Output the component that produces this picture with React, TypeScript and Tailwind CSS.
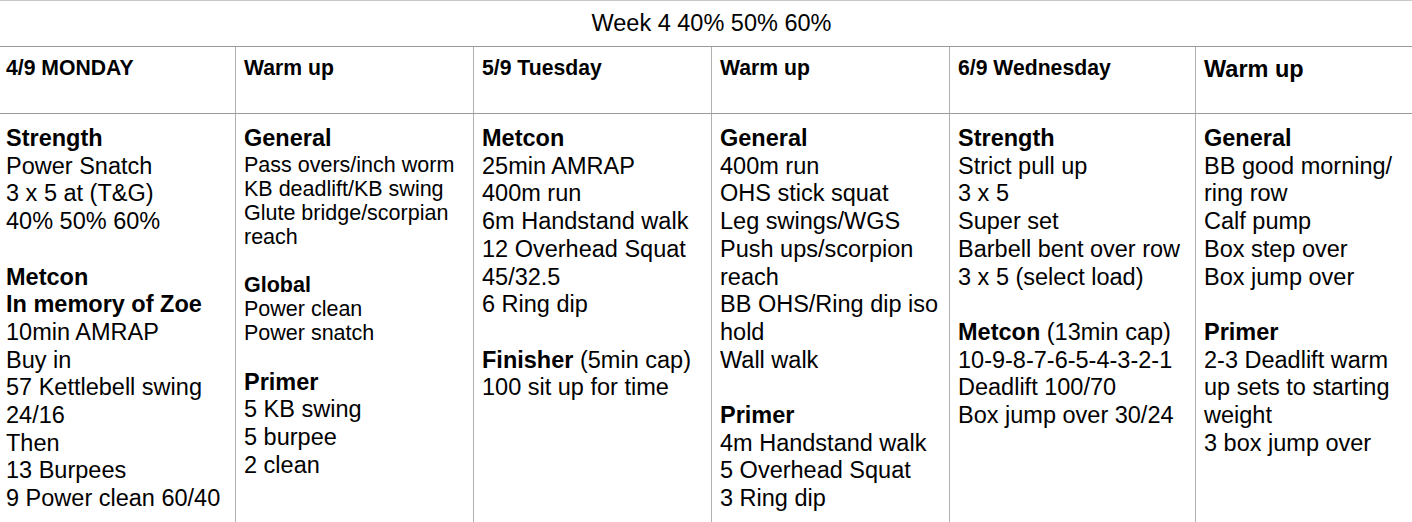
import React from "react";

type L = { t: string; k: "H" | "T" | "h" | "s" | "B" | "b"; extra?: string };

const H = (t: string, extra?: string): L => ({ t, k: "H", extra });
const T = (t: string): L => ({ t, k: "T" });
const h = (t: string): L => ({ t, k: "h" });
const s = (t: string): L => ({ t, k: "s" });
const B: L = { t: "", k: "B" };
const b: L = { t: "", k: "b" };

function Line({ l }: { l: L }) {
  if (l.k === "B") return <div className="h-[27.7px]" />;
  if (l.k === "b") return <div className="h-[24px]" />;
  if (l.k === "H")
    return (
      <div className="whitespace-nowrap text-[23.5px] leading-[27.7px]">
        <span className="font-bold">{l.t}</span>
        {l.extra ? <span> {l.extra}</span> : null}
      </div>
    );
  if (l.k === "T")
    return <div className="whitespace-nowrap text-[23.5px] leading-[27.7px]">{l.t}</div>;
  if (l.k === "h")
    return <div className="whitespace-nowrap text-[21.5px] leading-[24px] font-bold">{l.t}</div>;
  return <div className="whitespace-nowrap text-[21.5px] leading-[24px]">{l.t}</div>;
}

const cols: { head: string; big?: boolean; lines: L[] }[] = [
  {
    head: "4/9 MONDAY",
    lines: [
      H("Strength"),
      T("Power Snatch"),
      T("3 x 5 at (T&G)"),
      T("40% 50% 60%"),
      B,
      H("Metcon"),
      H("In memory of Zoe"),
      T("10min AMRAP"),
      T("Buy in"),
      T("57 Kettlebell swing"),
      T("24/16"),
      T("Then"),
      T("13 Burpees"),
      T("9 Power clean 60/40"),
    ],
  },
  {
    head: "Warm up",
    lines: [
      H("General"),
      s("Pass overs/inch worm"),
      s("KB deadlift/KB swing"),
      s("Glute bridge/scorpian"),
      s("reach"),
      b,
      h("Global"),
      s("Power clean"),
      s("Power snatch"),
      b,
      H("Primer"),
      T("5 KB swing"),
      T("5 burpee"),
      T("2 clean"),
    ],
  },
  {
    head: "5/9 Tuesday",
    lines: [
      H("Metcon"),
      T("25min AMRAP"),
      T("400m run"),
      T("6m Handstand walk"),
      T("12 Overhead Squat"),
      T("45/32.5"),
      T("6 Ring dip"),
      B,
      H("Finisher", "(5min cap)"),
      T("100 sit up for time"),
    ],
  },
  {
    head: "Warm up",
    lines: [
      H("General"),
      T("400m run"),
      T("OHS stick squat"),
      T("Leg swings/WGS"),
      T("Push ups/scorpion"),
      T("reach"),
      T("BB OHS/Ring dip iso"),
      T("hold"),
      T("Wall walk"),
      B,
      H("Primer"),
      T("4m Handstand walk"),
      T("5 Overhead Squat"),
      T("3 Ring dip"),
    ],
  },
  {
    head: "6/9 Wednesday",
    lines: [
      H("Strength"),
      T("Strict pull up"),
      T("3 x 5"),
      T("Super set"),
      T("Barbell bent over row"),
      T("3 x 5 (select load)"),
      B,
      H("Metcon", "(13min cap)"),
      T("10-9-8-7-6-5-4-3-2-1"),
      T("Deadlift 100/70"),
      T("Box jump over 30/24"),
    ],
  },
  {
    head: "Warm up",
    big: true,
    lines: [
      H("General"),
      T("BB good morning/"),
      T("ring row"),
      T("Calf pump"),
      T("Box step over"),
      T("Box jump over"),
      B,
      H("Primer"),
      T("2-3 Deadlift warm"),
      T("up sets to starting"),
      T("weight"),
      T("3 box jump over"),
    ],
  },
];

export default function App() {
  return (
    <div className="w-[1412px] h-[522px] overflow-hidden bg-white text-black font-['Liberation_Sans',Arial,sans-serif]">
      <div className="w-[1423px]">
        <div className="h-[46px] border-t border-[#c8c8c8] flex items-center justify-center pb-[1px]">
          <span className="text-[23.5px] leading-[27px]">Week 4 40% 50% 60%</span>
        </div>
        <div className="grid grid-cols-[235px_238px_238px_238px_246px_228px] border-t border-[#9a9a9a] h-[67px]">
          {cols.map((c, i) => (
            <div
              key={i}
              className={(i === 0 ? "pl-[6px]" : "border-l border-[#b0b0b0] pl-[8px]") + " pt-[9px]"}
            >
              <div
                className={
                  c.big
                    ? "font-bold text-[23.5px] leading-[27px] whitespace-nowrap"
                    : "font-bold text-[21.2px] leading-[24px] whitespace-nowrap"
                }
              >
                {c.head}
              </div>
            </div>
          ))}
        </div>
        <div className="grid grid-cols-[235px_238px_238px_238px_246px_228px] border-t border-[#9a9a9a] h-[420px]">
          {cols.map((c, i) => (
            <div
              key={i}
              className={(i === 0 ? "pl-[6px]" : "border-l border-[#b0b0b0] pl-[8px]") + " pt-[11px]"}
            >
              {c.lines.map((l, j) => (
                <Line key={j} l={l} />
              ))}
            </div>
          ))}
        </div>
      </div>
    </div>
  );
}
